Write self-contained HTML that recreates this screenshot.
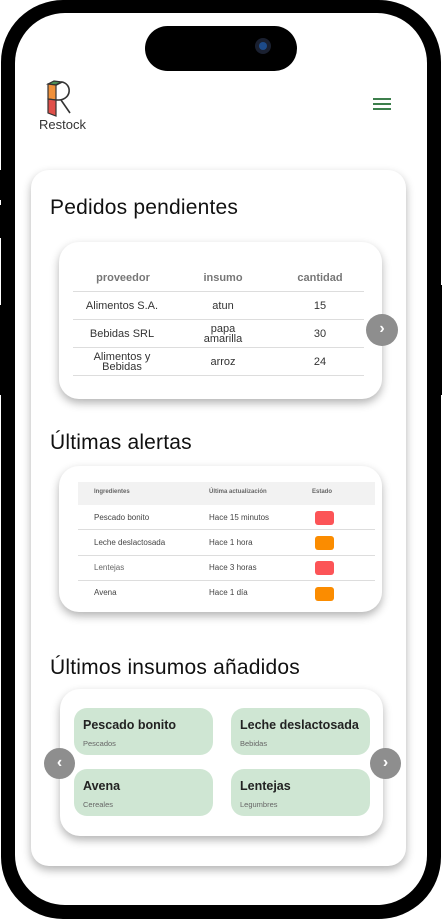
<!DOCTYPE html>
<html><head><meta charset="utf-8"><style>
*{margin:0;padding:0;box-sizing:border-box}
body{width:442px;height:919px;background:#fff;position:relative;overflow:hidden;font-family:"Liberation Sans",sans-serif;color:#222}
.abs{position:absolute}
.phone{left:1px;top:0;width:440px;height:919px;background:#000;border-radius:62px}
.screen{left:15px;top:13px;width:412px;height:892px;background:#fff;border-radius:50px;overflow:hidden}
.btn{background:#000}
.card{background:#fff;border-radius:20px;box-shadow:0 4px 9px rgba(0,0,0,.3)}
h2{position:absolute;font-weight:400;font-size:21px;color:#111;letter-spacing:.2px}
.t{position:absolute;font-size:11px;color:#333;text-align:center;line-height:10px}
.th{position:absolute;font-size:11px;font-weight:bold;color:#777;text-align:center}
.ln{position:absolute;height:1px;background:#ddd}
.arrow{position:absolute;border-radius:50%;background:#8e8e8e;color:#fff;font-size:16px;font-weight:bold;text-align:center}
.tile{position:absolute;width:139px;height:47px;background:#cfe6d3;border-radius:13px}
.tile b{position:absolute;left:9px;top:10px;font-size:12.5px;font-weight:600;color:#222}
.tile span{position:absolute;left:9px;top:31px;font-size:7.5px;color:#666}
.a{position:absolute;font-size:8px;color:#444}
.badge{position:absolute;left:315px;width:19px;height:14px;border-radius:3px}
</style></head><body>
<div class="abs btn" style="left:0;top:170px;width:4px;height:30px"></div>
<div class="abs btn" style="left:0;top:205px;width:4px;height:33px"></div>
<div class="abs btn" style="left:0;top:305px;width:4px;height:90px"></div>
<div class="abs btn" style="left:438px;top:285px;width:4px;height:110px"></div>
<div class="abs phone"></div>
<div class="abs screen"></div>
<div class="abs" style="left:145px;top:26px;width:152px;height:45px;background:#000;border-radius:23px"></div>
<div class="abs" style="left:255px;top:38px;width:16px;height:16px;border-radius:50%;background:#1a2030"><div style="margin:4px;width:8px;height:8px;border-radius:50%;background:#1d4b8a"></div></div>
<svg class="abs" style="left:44px;top:78px" width="34" height="42" viewBox="0 0 34 42">
<polygon points="4,6 10,3 18,4 12,7" fill="#4e8f55" stroke="#333" stroke-width="1.2"/>
<polygon points="4,6 12,7 12,22 4,21" fill="#f0903a" stroke="#333" stroke-width="1.2"/>
<polygon points="4,21 12,22 12,38 4,35" fill="#e0504a" stroke="#333" stroke-width="1.2"/>
<path d="M12,7 L18,4 C28,6 28,21 15,22 L12,22 M17,22 L26,35" fill="none" stroke="#333" stroke-width="1.6"/>
</svg>
<div class="abs" style="left:39px;top:117px;font-size:13px;color:#333">Restock</div>
<div class="abs" style="left:373px;top:98px;width:18px;height:2px;background:#3d7f4c;box-shadow:0 5px 0 #3d7f4c,0 10px 0 #3d7f4c"></div>

<div class="abs card" style="left:31px;top:170px;width:375px;height:696px;border-radius:18px"></div>
<h2 style="left:50px;top:196px">Pedidos pendientes</h2>
<div class="abs card" style="left:59px;top:242px;width:323px;height:157px"></div>
<div class="th" style="left:73px;width:100px;top:272px">proveedor</div>
<div class="th" style="left:173px;width:100px;top:272px">insumo</div>
<div class="th" style="left:270px;width:100px;top:272px">cantidad</div>
<div class="ln" style="left:73px;width:291px;top:291px"></div>
<div class="ln" style="left:73px;width:291px;top:319px"></div>
<div class="ln" style="left:73px;width:291px;top:347px"></div>
<div class="ln" style="left:73px;width:291px;top:375px"></div>
<div class="t" style="left:72px;width:100px;top:301px">Alimentos S.A.</div>
<div class="t" style="left:173px;width:100px;top:301px">atun</div>
<div class="t" style="left:270px;width:100px;top:301px">15</div>
<div class="t" style="left:72px;width:100px;top:329px">Bebidas SRL</div>
<div class="t" style="left:173px;width:100px;top:324px">papa<br>amarilla</div>
<div class="t" style="left:270px;width:100px;top:329px">30</div>
<div class="t" style="left:72px;width:100px;top:352px">Alimentos y<br>Bebidas</div>
<div class="t" style="left:173px;width:100px;top:357px">arroz</div>
<div class="t" style="left:270px;width:100px;top:357px">24</div>
<div class="arrow" style="left:366px;top:314px;width:32px;height:32px;line-height:30px">›</div>

<h2 style="left:50px;top:431px">Últimas alertas</h2>
<div class="abs card" style="left:59px;top:466px;width:323px;height:146px"></div>
<div class="abs" style="left:78px;top:482px;width:297px;height:23px;background:#f2f2f2"></div>
<div class="a" style="left:94px;top:489px;font-size:6px;font-weight:bold;color:#666">Ingredientes</div>
<div class="a" style="left:209px;top:489px;font-size:6px;font-weight:bold;color:#666">Última actualización</div>
<div class="a" style="left:312px;top:489px;font-size:6px;font-weight:bold;color:#666">Estado</div>
<div class="ln" style="left:78px;width:297px;top:529px"></div>
<div class="ln" style="left:78px;width:297px;top:555px"></div>
<div class="ln" style="left:78px;width:297px;top:580px"></div>
<div class="a" style="left:94px;top:513px">Pescado bonito</div><div class="a" style="left:209px;top:513px">Hace 15 minutos</div><div class="badge" style="top:511px;background:#fc5457"></div>
<div class="a" style="left:94px;top:538px">Leche deslactosada</div><div class="a" style="left:209px;top:538px">Hace 1 hora</div><div class="badge" style="top:536px;background:#fb8c00"></div>
<div class="a" style="left:94px;top:563px;color:#666">Lentejas</div><div class="a" style="left:209px;top:563px">Hace 3 horas</div><div class="badge" style="top:561px;background:#fc5457"></div>
<div class="a" style="left:94px;top:588px">Avena</div><div class="a" style="left:209px;top:588px">Hace 1 día</div><div class="badge" style="top:587px;background:#fb8c00"></div>

<h2 style="left:50px;top:656px">Últimos insumos añadidos</h2>
<div class="abs card" style="left:60px;top:689px;width:323px;height:147px"></div>
<div class="tile" style="left:74px;top:708px"><b>Pescado bonito</b><span>Pescados</span></div>
<div class="tile" style="left:231px;top:708px"><b>Leche deslactosada</b><span>Bebidas</span></div>
<div class="tile" style="left:74px;top:769px"><b>Avena</b><span>Cereales</span></div>
<div class="tile" style="left:231px;top:769px"><b>Lentejas</b><span>Legumbres</span></div>
<div class="arrow" style="left:44px;top:748px;width:31px;height:31px;line-height:29px">‹</div>
<div class="arrow" style="left:370px;top:748px;width:31px;height:31px;line-height:29px">›</div>
</body></html>
